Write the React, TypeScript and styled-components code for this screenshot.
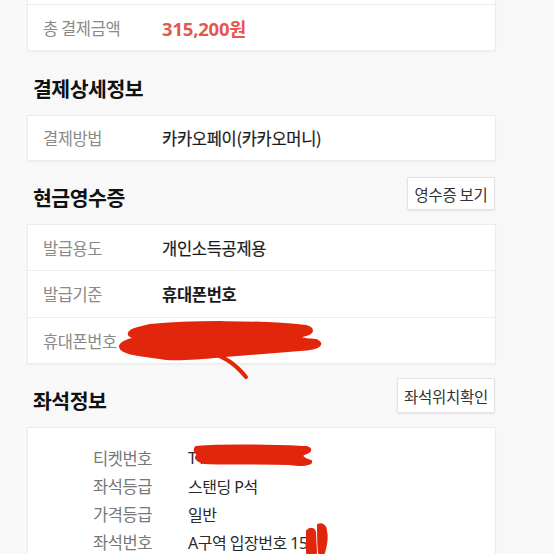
import React from "react";
import styled, { createGlobalStyle } from "styled-components";

const Global = createGlobalStyle`
  html, body { margin: 0; padding: 0; background: #f8f8f8; }
  body { font-family: "Noto Sans CJK KR", "Noto Sans", sans-serif; color: #222; }
`;

const Page = styled.div`
  position: relative;
  width: 554px;
  height: 554px;
  overflow: hidden;
  padding: 0 58px 0 27px;
  box-sizing: border-box;
`;

const Card = styled.div<{ $cut?: boolean }>`
  background: #fff;
  border: 1px solid #ececec;
  border-top: ${(p) => (p.$cut ? "none" : "1px solid #ececec")};
  box-shadow: 0 1px 2px rgba(0, 0, 0, 0.04);
`;

const CutTop = styled.div`
  height: 4px;
  border-bottom: 1px solid #ececec;
`;

const Row = styled.div<{ $h?: number }>`
  display: flex;
  align-items: center;
  height: ${(p) => p.$h ?? 46}px;
  padding-left: 15px;
  box-sizing: border-box;
  & + & { border-top: 1px solid #efefef; }
`;

const Label = styled.div`
  width: 119px;
  flex: none;
  font-size: 16.5px;
  color: #8a8a8a;
  letter-spacing: -0.4px;
`;

const Value = styled.div<{ $bold?: boolean }>`
  font-size: 16.5px;
  font-weight: ${(p) => (p.$bold ? 700 : 400)};
  -webkit-text-stroke: ${(p) => (p.$bold ? "0" : "0.2px")} #1a1a1a;
  color: #1a1a1a;
  letter-spacing: -0.3px;
`;

const Amount = styled.div`
  font-size: 18.5px;
  font-weight: 700;
  color: #e4574f;
  font-family: "Noto Sans", "Noto Sans CJK KR", sans-serif;
  letter-spacing: -0.2px;
`;

const SectionHead = styled.div<{ $h: number }>`
  display: flex;
  align-items: flex-end;
  justify-content: space-between;
  height: ${(p) => p.$h}px;
  padding: 0 0 13px 6px;
  box-sizing: border-box;
`;

const Heading = styled.h2`
  margin: 0;
  font-size: 20.5px;
  font-weight: 700;
  color: #111;
  letter-spacing: -0.5px;
  line-height: 28px;
`;

const Btn = styled.button<{ $w: number; $h: number; $fs: number }>`
  width: ${(p) => p.$w}px;
  height: ${(p) => p.$h}px;
  margin-bottom: 1px;
  margin-right: 1px;
  background: #fff;
  border: 1px solid #e2e2e2;
  border-radius: 2px;
  box-shadow: 0 1px 2px rgba(0, 0, 0, 0.08);
  font-family: "Noto Sans CJK KR", sans-serif;
  font-size: ${(p) => p.$fs}px;
  color: #333;
  padding: 0;
  letter-spacing: -0.3px;
`;

const SeatCard = styled(Card)`
  padding: 16px 0 0 65px;
  height: 140px;
  box-sizing: border-box;
`;

const SeatRow = styled.div`
  display: flex;
  align-items: center;
  height: 28px;
`;

const SeatLabel = styled.div`
  width: 95px;
  flex: none;
  font-size: 16.5px;
  color: #777;
  letter-spacing: -0.4px;
`;

const SeatValue = styled.div`
  font-size: 16px;
  color: #2a2a2a;
  letter-spacing: -0.5px;
  font-family: "Noto Sans", "Noto Sans CJK KR", sans-serif;
`;

const Scribble = styled.svg`
  position: absolute;
  left: 0;
  top: 0;
  pointer-events: none;
`;

export default function App() {
  return (
    <>
      <Global />
      <Page>
        <Card $cut>
          <CutTop />
          <Row $h={45}>
            <Label>총 결제금액</Label>
            <Amount>315,200원</Amount>
          </Row>
        </Card>

        <SectionHead $h={64}>
          <Heading>결제상세정보</Heading>
        </SectionHead>
        <Card>
          <Row $h={44}>
            <Label>결제방법</Label>
            <Value>카카오페이(카카오머니)</Value>
          </Row>
        </Card>

        <SectionHead $h={63}>
          <Heading>현금영수증</Heading>
          <Btn $w={88} $h={33} $fs={15.5}>영수증 보기</Btn>
        </SectionHead>
        <Card>
          <Row $h={45}>
            <Label>발급용도</Label>
            <Value>개인소득공제용</Value>
          </Row>
          <Row $h={47}>
            <Label>발급기준</Label>
            <Value $bold>휴대폰번호</Value>
          </Row>
          <Row $h={46}>
            <Label>휴대폰번호</Label>
            <Value />
          </Row>
        </Card>

        <SectionHead $h={63}>
          <Heading>좌석정보</Heading>
          <Btn $w={98} $h={35} $fs={15.5}>좌석위치확인</Btn>
        </SectionHead>
        <SeatCard>
          <SeatRow>
            <SeatLabel>티켓번호</SeatLabel>
            <SeatValue>T1</SeatValue>
          </SeatRow>
          <SeatRow>
            <SeatLabel>좌석등급</SeatLabel>
            <SeatValue>스탠딩 P석</SeatValue>
          </SeatRow>
          <SeatRow>
            <SeatLabel>가격등급</SeatLabel>
            <SeatValue>일반</SeatValue>
          </SeatRow>
          <SeatRow>
            <SeatLabel>좌석번호</SeatLabel>
            <SeatValue>A구역 입장번호 15</SeatValue>
          </SeatRow>
        </SeatCard>

        <Scribble width="554" height="554" viewBox="0 0 554 554">
          <g fill="#e2260c" stroke="#e2260c" strokeLinecap="round" strokeLinejoin="round">
            <path
              strokeWidth="2"
              d="M150 325 C190 321 260 321 306 326 C314 328 314 333 306 335 C296 337 300 339 316 340 C324 343 322 349 300 350 C275 352 250 354 225 356 C195 359 168 360 160 358 C142 356 126 354 121 349 C117 344 126 340 136 338 C126 336 126 331 138 328 Z"
            />
            <path fill="none" strokeWidth="4" d="M210 353 C226 357 236 365 246 377" />
            <path
              strokeWidth="2"
              d="M196 447 C232 444 280 446 306 447 C312 448 312 452 304 454 C300 456 304 459 311 461 C313 465 300 466 290 464 C260 463 222 464 204 463 C196 461 194 457 198 455 C194 452 194 449 196 447 Z"
            />
            <path strokeWidth="2" d="M307 531 C310 528 314 528 315 532 L316 553 L307 553 Z" />
            <path strokeWidth="2" d="M318 525 C322 523 326 526 326 531 C328 538 326 546 324 553 L319 553 C318 545 318 535 318 525 Z" />
          </g>
        </Scribble>
      </Page>
    </>
  );
}
